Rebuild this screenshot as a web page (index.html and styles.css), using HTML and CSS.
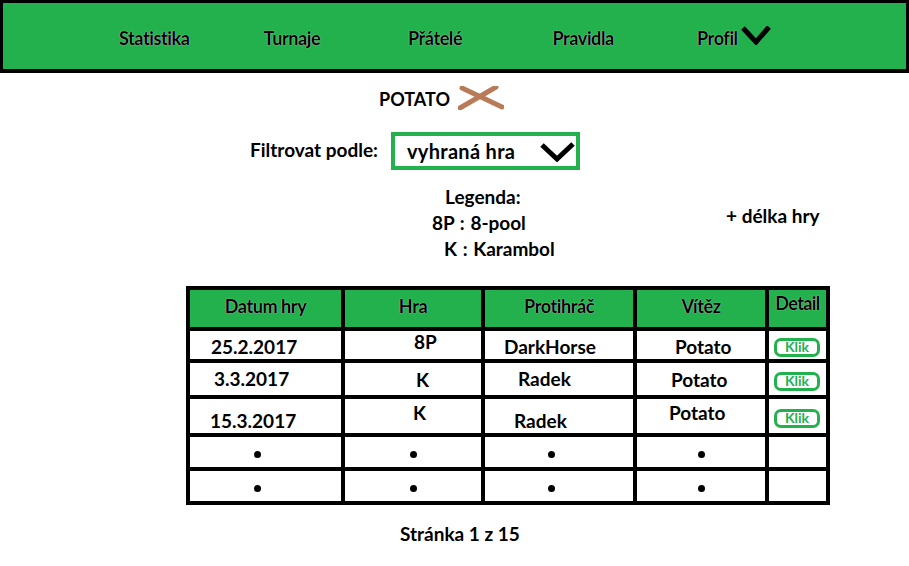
FILE: index.html
```html
<!DOCTYPE html>
<html lang="cs">
<head>
<meta charset="utf-8">
<title>Statistika</title>
<link rel="stylesheet" href="styles.css">
</head>
<body>
<header class="nav">
  <nav class="nav-items">
    <a class="nav-link">Statistika</a>
    <a class="nav-link">Turnaje</a>
    <a class="nav-link">Přátelé</a>
    <a class="nav-link">Pravidla</a>
    <a class="nav-link nav-profile">Profil
      <svg class="nav-chev" width="30" height="19" viewBox="0 0 30 19"><polyline points="2,2 15,16 28,1" fill="none" stroke="#000" stroke-width="5" stroke-linejoin="miter"/></svg>
    </a>
  </nav>
</header>

<div class="player">
  <span class="player-name">POTATO</span>
  <svg class="player-x" width="46" height="24" viewBox="0 0 46 24"><line x1="4" y1="2" x2="44" y2="21" stroke="#b97a57" stroke-width="5" stroke-linecap="round"/><line x1="2" y1="22" x2="38" y2="1" stroke="#b97a57" stroke-width="5" stroke-linecap="round"/></svg>
</div>

<div class="filter">
  <span class="filter-label">Filtrovat podle:</span>
  <div class="select">
    <span class="select-value">vyhraná hra</span>
    <svg class="select-chev" width="35" height="20" viewBox="0 0 35 20"><polyline points="2,3 17,17 33,2" fill="none" stroke="#000" stroke-width="5"/></svg>
  </div>
</div>

<div class="info">
  <div class="legend">
    <div class="legend-title">Legenda:</div>
    <div class="legend-line">8P : 8-pool</div>
    <div class="legend-line legend-k">K : Karambol</div>
  </div>
  <div class="note">+ délka hry</div>
</div>

<table class="games">
  <colgroup>
    <col class="w1"><col class="w2"><col class="w3"><col class="w4"><col class="w5">
  </colgroup>
  <thead>
    <tr>
      <th>Datum hry</th>
      <th>Hra</th>
      <th>Protihráč</th>
      <th>Vítěz</th>
      <th class="c5">Detail</th>
    </tr>
  </thead>
  <tbody>
    <tr class="r1">
      <td class="c1"><span class="d1">25.2.2017</span></td>
      <td class="c2"><span class="up">8P</span></td>
      <td class="c3"><span class="d1">DarkHorse</span></td>
      <td class="c4"><span class="d1">Potato</span></td>
      <td class="c5"><span class="klik">Klik</span></td>
    </tr>
    <tr class="r2">
      <td class="c1"><span class="up">3.3.2017</span></td>
      <td class="c2">K</td>
      <td class="c3"><span class="up">Radek</span></td>
      <td class="c4">Potato</td>
      <td class="c5"><span class="klik">Klik</span></td>
    </tr>
    <tr class="r3">
      <td class="c1"><span class="down">15.3.2017</span></td>
      <td class="c2"><span class="up">K</span></td>
      <td class="c3"><span class="down">Radek</span></td>
      <td class="c4"><span class="up">Potato</span></td>
      <td class="c5"><span class="klik">Klik</span></td>
    </tr>
    <tr class="r4">
      <td class="dotcell"><span class="dot dl"></span></td>
      <td class="dotcell"><span class="dot"></span></td>
      <td class="dotcell"><span class="dot dl"></span></td>
      <td class="dotcell"><span class="dot"></span></td>
      <td></td>
    </tr>
    <tr class="r5">
      <td class="dotcell"><span class="dot dl"></span></td>
      <td class="dotcell"><span class="dot"></span></td>
      <td class="dotcell"><span class="dot dl"></span></td>
      <td class="dotcell"><span class="dot"></span></td>
      <td></td>
    </tr>
  </tbody>
</table>

<div class="pager">Stránka 1 z 15</div>
</body>
</html>
```

FILE: styles.css
```css
html, body {
  margin: 0;
  padding: 0;
  background: #fff;
}
body {
  width: 909px;
  height: 566px;
  overflow: hidden;
  font-family: Lato, "Open Sans", "Liberation Sans", sans-serif;
  font-weight: 700;
  color: #000;
}

/* Navigation */
.nav {
  box-sizing: border-box;
  width: 909px;
  height: 73px;
  background: #22b14c;
  border: 3px solid #000;
  border-bottom-width: 4px;
}
.nav-items {
  display: grid;
  grid-template-columns: repeat(5, 144.5px);
  padding-left: 116px;
  height: 100%;
  align-items: center;
}
.nav-link {
  font-size: 18px;
  font-weight: 700;
  letter-spacing: -0.4px;
  color: #000;
  text-shadow: 0 0 1px #fff;
  display: flex;
  align-items: center;
  line-height: 20px;
  margin-top: 3px;
}
.nav-chev {
  margin-left: 3px;
  margin-top: -4px;
}

/* Player */
.player {
  display: flex;
  align-items: center;
  padding-left: 379px;
  margin-top: 13px;
  height: 26px;
}
.player-name {
  font-size: 18px;
}
.player-x {
  margin-left: 8px;
  margin-top: -2px;
}

/* Filter */
.filter {
  display: flex;
  align-items: center;
  padding-left: 250px;
  margin-top: 20px;
}
.filter-label {
  font-size: 19px;
  width: 141px;
  margin-top: -4px;
}
.select {
  box-sizing: border-box;
  width: 189px;
  height: 38px;
  border: 4px solid #22b14c;
  display: flex;
  align-items: center;
  padding-left: 12px;
}
.select-value {
  font-size: 20px;
  width: 133px;
  letter-spacing: 0.3px;
}
.select-chev {
  margin-top: 1px;
}

/* Legend */
.info {
  display: flex;
  margin-top: 14px;
}
.legend {
  box-sizing: border-box;
  width: 726px;
  padding-left: 432px;
  font-size: 19px;
  line-height: 26px;
}
.legend-title {
  padding-left: 13px;
}
.legend-line {
  word-spacing: 1px;
}
.legend-k {
  padding-left: 12px;
}
.note {
  font-size: 19px;
  margin-top: 20px;
}

/* Table */
.games {
  border-collapse: collapse;
  table-layout: fixed;
  width: 644px;
  margin-left: 186px;
  margin-top: 24px;
  font-size: 19px;
}
.w1 { width: 155px; }
.w2 { width: 140px; }
.w3 { width: 152px; }
.w4 { width: 132px; }
.w5 { width: 61px; }

.games th,
.games td {
  border: 4px solid #000;
  padding: 0;
  text-align: left;
  vertical-align: middle;
  white-space: nowrap;
  overflow: visible;
}
.games th {
  background: #22b14c;
  height: 30px;
  padding-bottom: 5px;
  font-size: 18px;
  font-weight: 700;
  text-align: center;
  text-shadow: 0 0 1px #fff;
  letter-spacing: -0.4px;
}
.games th.c5 {
  vertical-align: top;
  padding-top: 2px;
  letter-spacing: -0.6px;
}

.games td.c1 { padding-left: 21px; }
.games td.c2 { padding-left: 69px; }
.games td.c3 { padding-left: 19px; }
.games td.c4 { padding-left: 38px; }
.games td.c5 { padding-left: 5px; }

.r1 td { height: 28px; }
.r2 td { height: 32px; }
.r3 td { height: 34px; }
.r4 td { height: 30px; }
.r5 td { height: 30px; }

.games .r2 td.c1 { padding-left: 24px; }
.games .r2 td.c2 { padding-left: 71px; }
.games .r2 td.c3 { padding-left: 33px; }
.games .r2 td.c4 { padding-left: 34px; }
.games .r3 td.c1 { padding-left: 20px; }
.games .r3 td.c2 { padding-left: 68px; }
.games .r3 td.c3 { padding-left: 29px; }
.games .r3 td.c4 { padding-left: 32px; }

.up {
  position: relative;
  top: -4px;
}
.r2 .up {
  top: -1px;
}
.down {
  position: relative;
  top: 4px;
}
.d1 {
  position: relative;
  top: 1px;
}

.klik {
  display: inline-block;
  box-sizing: border-box;
  width: 46px;
  height: 19px;
  border: 3px solid #22b14c;
  border-radius: 7px;
  color: #22b14c;
  font-size: 14px;
  line-height: 12px;
  text-align: center;
  vertical-align: middle;
}

.games td.dotcell {
  padding-left: 0;
  text-align: center;
}
.dot {
  display: inline-block;
  width: 7px;
  height: 7px;
  border-radius: 50%;
  background: #000;
  vertical-align: middle;
}
.dl {
  position: relative;
  left: -8px;
}

/* Pager */
.pager {
  font-size: 19px;
  padding-left: 400px;
  margin-top: 17px;
}
```
